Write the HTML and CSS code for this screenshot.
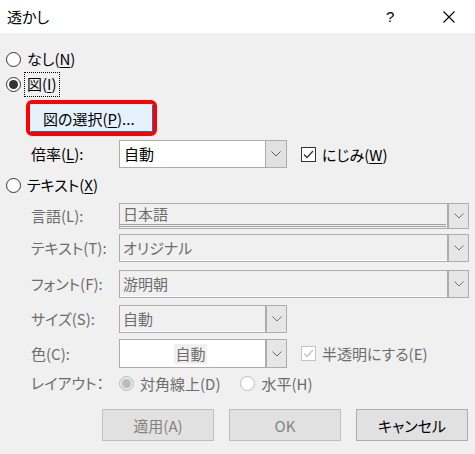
FILE: index.html
```html
<!DOCTYPE html>
<html lang="ja">
<head>
<meta charset="utf-8">
<title>透かし</title>
<link rel="stylesheet" href="styles.css">
</head>
<body>
<div class="window">
  <div class="titlebar">
    <span class="title">透かし</span>
    <span class="help">?</span>
    <span class="close"><svg width="12" height="12" viewBox="0 0 12 12"><path d="M0.5 0.5 L11.5 11.5 M11.5 0.5 L0.5 11.5" stroke="#000" stroke-width="1.1" fill="none"/></svg></span>
  </div>
  <div class="body">
    <div class="radio-row row-none">
      <span class="radio"></span><span class="txt">なし(<u>N</u>)</span>
    </div>
    <div class="radio-row row-pic">
      <span class="radio checked"></span><span class="txt focus">図(<u>I</u>)</span>
    </div>
    <div class="pick-row">
      <div class="highlight"><button class="btn-pick">図の選択(<u>P</u>)...</button></div>
    </div>
    <div class="field-row row-scale">
      <span class="label">倍率(<u>L</u>):</span>
      <div class="select small">
        <span class="val">自動</span>
        <span class="arrow"><svg width="10" height="6" viewBox="0 0 10 6"><path d="M0.5 0.5 L5 5 L9.5 0.5" stroke="#606060" fill="none" stroke-width="1"/></svg></span>
      </div>
      <span class="check"><span class="box"><svg width="13" height="13" viewBox="0 0 13 13"><path d="M2 6.5 L5 9.5 L11 3" stroke="#333" stroke-width="1.3" fill="none"/></svg></span><span>にじみ(<u>W</u>)</span></span>
    </div>
    <div class="radio-row row-text">
      <span class="radio"></span><span class="txt">テキスト(<u>X</u>)</span>
    </div>
    <div class="field-row disabled row-lang">
      <span class="label">言語(L):</span>
      <div class="select wide dis">
        <span class="val dbl">日本語</span>
        <span class="arrow"><svg width="10" height="6" viewBox="0 0 10 6"><path d="M0.5 0.5 L5 5 L9.5 0.5" stroke="#707070" fill="none" stroke-width="1"/></svg></span>
      </div>
    </div>
    <div class="field-row disabled row-txt">
      <span class="label">テキスト(T):</span>
      <div class="select wide dis">
        <span class="val">オリジナル</span>
        <span class="arrow"><svg width="10" height="6" viewBox="0 0 10 6"><path d="M0.5 0.5 L5 5 L9.5 0.5" stroke="#707070" fill="none" stroke-width="1"/></svg></span>
      </div>
    </div>
    <div class="field-row disabled row-font">
      <span class="label">フォント(F):</span>
      <div class="select wide dis">
        <span class="val">游明朝</span>
        <span class="arrow"><svg width="10" height="6" viewBox="0 0 10 6"><path d="M0.5 0.5 L5 5 L9.5 0.5" stroke="#707070" fill="none" stroke-width="1"/></svg></span>
      </div>
    </div>
    <div class="field-row disabled row-size">
      <span class="label">サイズ(S):</span>
      <div class="select small dis">
        <span class="val">自動</span>
        <span class="arrow"><svg width="10" height="6" viewBox="0 0 10 6"><path d="M0.5 0.5 L5 5 L9.5 0.5" stroke="#707070" fill="none" stroke-width="1"/></svg></span>
      </div>
    </div>
    <div class="field-row disabled row-color">
      <span class="label">色(C):</span>
      <div class="select small white">
        <span class="val center"><span class="chip">自動</span></span>
        <span class="arrow"><svg width="10" height="6" viewBox="0 0 10 6"><path d="M0.5 0.5 L5 5 L9.5 0.5" stroke="#707070" fill="none" stroke-width="1"/></svg></span>
      </div>
      <span class="check dis"><span class="box"><svg width="13" height="13" viewBox="0 0 13 13"><path d="M2 6.5 L5 9.5 L11 3" stroke="#c4c4c4" stroke-width="1.3" fill="none"/></svg></span><span>半透明にする(E)</span></span>
    </div>
    <div class="field-row disabled row-layout">
      <span class="label">レイアウト：</span>
      <span class="opt"><span class="radio dis checked"></span><span>対角線上(D)</span></span>
      <span class="opt opt2"><span class="radio dis"></span><span>水平(H)</span></span>
    </div>
    <div class="buttons">
      <button class="btn dis">適用(A)</button>
      <button class="btn dis">OK</button>
      <button class="btn">キャンセル</button>
    </div>
  </div>
</div>
</body>
</html>
```

FILE: styles.css
```css
* { box-sizing: border-box; }
html, body { margin: 0; padding: 0; }
body {
  width: 475px;
  height: 454px;
  overflow: hidden;
  font-family: "Noto Sans CJK JP", "Noto Sans", sans-serif;
  font-feature-settings: "palt";
  font-size: 15px;
  color: #000;
  background: #f0f0f0;
}
u { text-decoration: underline; text-underline-offset: 2px; text-decoration-thickness: 1px; }
.window { width: 475px; height: 454px; display: flex; flex-direction: column; }
.titlebar {
  height: 33px;
  background: #fff;
  display: flex;
  align-items: center;
  padding-left: 7px;
}
.title { font-size: 15px; flex: 1; line-height: 1; }
.help { font-family: "Liberation Sans", sans-serif; font-size: 15px; width: 12px; margin-right: 45px; line-height: 1; }
.close { width: 12px; height: 12px; margin-right: 20px; display: flex; }
.body {
  flex: 1;
  background: #f0f0f0;
  display: flex;
  flex-direction: column;
  padding-top: 15px;
}
.radio-row { display: flex; align-items: center; height: 22px; padding-left: 6px; }
.radio {
  width: 15px; height: 15px; border-radius: 50%;
  border: 1px solid #333; background: #fff;
  display: inline-flex; align-items: center; justify-content: center;
  flex: none;
}
.radio.checked::after {
  content: ""; width: 9px; height: 9px; border-radius: 50%; background: #333;
}
.radio.dis { border-color: #bcbcbc; background: #fff; }
.radio.dis.checked { background: #e6e6e6; }
.radio.dis.checked::after { background: #bcbcbc; }
.txt { margin-left: 6px; line-height: 20px; }
.row-pic { margin-top: 3px; }
.focus { outline: 1px dotted #000; outline-offset: 0; padding: 0 2px; margin-left: 4px; height: 23px; display: inline-flex; align-items: center; }
.pick-row { display: flex; padding-left: 26px; margin-top: 5px; }
.highlight {
  border: 4px solid #ff0000;
  border-radius: 6px;
  width: 131px;
  height: 36px;
  display: flex;
}
.btn-pick {
  flex: 1;
  font: inherit;
  background: #e5f1fb;
  border: 1px solid #e5f1fb;
  border-right-color: #0078d7;
  border-bottom-color: #0078d7;
  padding: 0 0 0 12px;
  text-align: left;
  color: #000;
}
.field-row { display: flex; align-items: center; padding-left: 31px; }
.label { width: 88px; flex: none; line-height: 20px; }
.disabled .label { color: #6d6d6d; }
.select {
  display: flex;
  border: 1px solid #adadad;
  height: 28px;
  background: #fff;
}
.select.small { width: 168px; }
.select.wide { width: 350px; }
.select.dis { background: #f0f0f0; border-color: #adadad; }
.val { flex: 1; display: flex; align-items: center; padding-left: 4px; line-height: 20px; }
.select.dis .val { color: #6d6d6d; border-bottom: 1px solid #fff; padding-left: 3px; }
.val.dbl { border-bottom: 3px double #a0a0a0 !important; margin: 0 1px 1px 0; }
.val.center { justify-content: center; padding-left: 0; padding-right: 4px; }
.chip { background: #f0f0f0; color: #6d6d6d; padding: 0 1px; }
.arrow {
  width: 21px; flex: none;
  background: #e1e1e1;
  border-left: 1px solid #adadad;
  display: flex; align-items: center; justify-content: center;
}
.select.dis .arrow, .select.white .arrow { background: #e6e6e6; border-left: 2px solid #adadad; }
.row-scale { margin-top: 4px; }
.check { display: flex; align-items: center; margin-left: 14px; }
.box {
  width: 15px; height: 15px; border: 1px solid #333; background: #fff;
  display: flex; align-items: center; justify-content: center; margin-right: 6px;
}
.check.dis { color: #6d6d6d; }
.check.dis .box { border-color: #c4c4c4; }
.row-text { margin-top: 6px; }
.row-lang { margin-top: 7px; }
.row-lang .select { height: 26px; }
.row-txt { margin-top: 5px; }
.row-font { margin-top: 8px; }
.row-size { margin-top: 7px; }
.row-color { margin-top: 6px; }
.row-color .select { height: 29px; }
.row-layout { margin-top: 4px; height: 22px; }
.opt { display: flex; align-items: center; color: #6d6d6d; }
.opt .radio { margin-right: 6px; }
.opt2 { margin-left: 20px; }
.buttons {
  display: flex;
  justify-content: flex-end;
  gap: 15px;
  padding-right: 7px;
  margin-top: 15px;
}
.btn {
  width: 112px;
  height: 32px;
  font: inherit;
  font-size: 15px;
  background: #e1e1e1;
  border: 1px solid #adadad;
  color: #000;
  padding: 0;
}
.btn.dis { color: #838383; background: #e1e1e1; border-color: #bfbfbf; }
```
